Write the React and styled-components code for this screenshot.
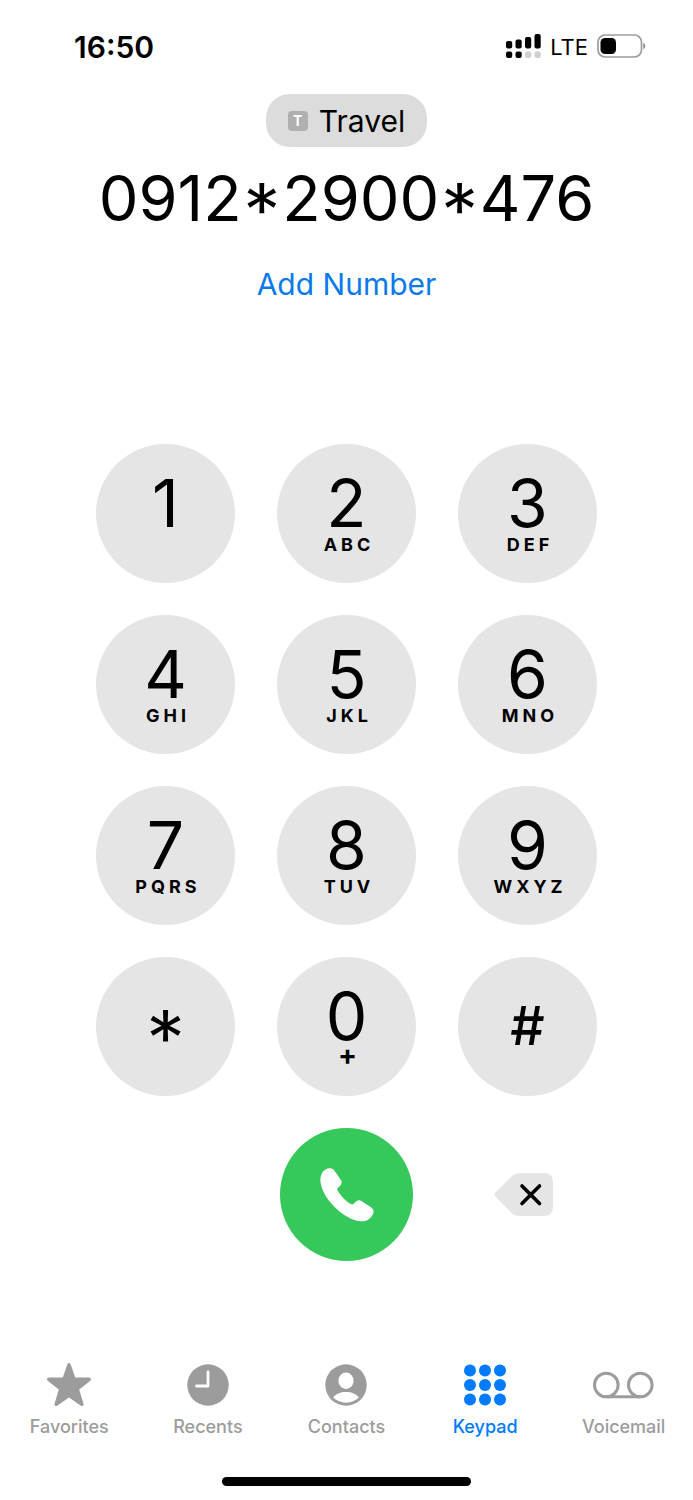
import React, { useState } from 'react'
import styled, { createGlobalStyle } from 'styled-components'

const keys = [
	{ digit: '1', letters: '' },
	{ digit: '2', letters: 'ABC' },
	{ digit: '3', letters: 'DEF' },
	{ digit: '4', letters: 'GHI' },
	{ digit: '5', letters: 'JKL' },
	{ digit: '6', letters: 'MNO' },
	{ digit: '7', letters: 'PQRS' },
	{ digit: '8', letters: 'TUV' },
	{ digit: '9', letters: 'WXYZ' },
	{ digit: '*', isSymbol: true },
	{ digit: '0', letters: '+' },
	{ digit: '#', isSymbol: true },
]

const SignalIcon = () => (
	<svg width="35" height="26" viewBox="0 0 35 26" aria-hidden="true">
		<rect x="0" y="7" width="6.200" height="7.500" rx="2" />
		<rect x="9.500" y="5.500" width="6.200" height="9" rx="2" />
		<rect x="19" y="3" width="6.200" height="11.500" rx="2" />
		<rect x="28.500" y="0" width="6.200" height="14.500" rx="2" />
		<rect x="0" y="17.500" width="6.200" height="6.500" rx="2" />
		<rect x="9.500" y="17.500" width="6.200" height="6.500" rx="2" />
		<rect x="19" y="17.500" width="6.200" height="6.500" rx="2" fill="#d0d0d0" />
		<rect x="28.500" y="17.500" width="6.200" height="6.500" rx="2" fill="#d0d0d0" />
	</svg>
)

const BatteryIcon = () => (
	<svg width="50" height="26" viewBox="0 0 50 26" aria-hidden="true">
		<rect x="1" y="1" width="43.500" height="22" rx="7" fill="none" stroke="#9c9c9c" strokeWidth="1.700" />
		<rect x="3.500" y="4" width="15.500" height="16" rx="4.500" />
		<path d="M46.300 8.700q2 1 2 3.300t-2 3.300z" fill="#8c8c8c" />
	</svg>
)

const PhoneIcon = () => (
	<svg width="54" height="54" viewBox="0 0 54 54" aria-hidden="true">
		<path
			fill="#fff"
			d="M9.5 .3C12 .2 13.500 1.200 14.900 3.200L20.700 11.800C22.200 14 22 15.800 20.300 17.500L18 19.700C17 20.700 17 21.400 17.700 22.700C20.500 27.500 26 33.200 30.900 36.100C32 36.700 32.800 36.600 33.700 35.700L35.700 33.700C37.500 31.900 39.500 31.700 41.800 33.200L50.600 39.100C53.900 41.300 54.300 43.800 52.400 47.200C50.300 51 46 53.500 41.300 53.300C32.500 53 22 46.500 14.300 38.700C6.500 30.900 .7 21 .4 12.600C.2 6.500 3.500 .6 9.500 .3Z"
		/>
	</svg>
)

const DeleteIcon = () => (
	<svg width="59" height="43" viewBox="0 0 59 43" aria-hidden="true">
		<path
			fill="#e5e5e5"
			d="M1.200 19.700L17.500 3.500Q21 0 26 0H50Q59 0 59 9V34Q59 43 50 43H26Q21 43 17.500 39.800L1.200 23.300Q-.6 21.500 1.200 19.700Z"
		/>
		<path d="M28 13L45.500 30.500M45.500 13L28 30.500" stroke="#000" strokeWidth="3.600" strokeLinecap="round" />
	</svg>
)

const StarIcon = () => (
	<svg width="46" height="44" viewBox="0 0 46 44" aria-hidden="true">
		<path
			d="M23 1.800L28 16.300H43.200L31.200 26L35.800 41.200L23 32.200L10.200 41.200L14.800 26L2.800 16.300H18Z"
			fill="currentColor"
			stroke="currentColor"
			strokeWidth="3.500"
			strokeLinejoin="round"
		/>
	</svg>
)

const ClockIcon = () => (
	<svg width="42" height="42" viewBox="0 0 42 42" aria-hidden="true">
		<circle cx="21" cy="21" r="20.700" fill="currentColor" />
		<path d="M21 8V22H9.500" fill="none" stroke="#fff" strokeWidth="2.800" strokeLinecap="round" strokeLinejoin="round" />
	</svg>
)

const PersonIcon = () => (
	<svg width="42" height="42" viewBox="0 0 42 42" aria-hidden="true">
		<circle cx="21" cy="21" r="20.700" fill="currentColor" />
		<ellipse cx="21" cy="16.800" rx="7.600" ry="8.200" fill="#fff" />
		<path d="M8.200 33.600C10.500 29.800 15.300 27.900 21 27.900S31.500 29.800 33.800 33.600C30.500 36.900 26 38.800 21 38.800S11.500 36.900 8.200 33.600Z" fill="#fff" />
	</svg>
)

const KeypadIcon = () => (
	<svg width="42" height="42" viewBox="0 0 42 42" aria-hidden="true" fill="currentColor">
		{[6.5, 21, 35.5].map(y => [6, 21, 36].map(x => <circle key={`${x}-${y}`} cx={x} cy={y} r="6" />))}
	</svg>
)

const VoicemailIcon = () => (
	<svg width="62" height="28" viewBox="0 0 62 28" aria-hidden="true" fill="none" stroke="currentColor" strokeWidth="3">
		<circle cx="13.300" cy="14" r="11.800" />
		<circle cx="47.300" cy="14" r="11.800" />
		<path d="M13.300 25.800H47.300" />
	</svg>
)

const tabs = [
	{ name: 'Favorites', Icon: StarIcon },
	{ name: 'Recents', Icon: ClockIcon },
	{ name: 'Contacts', Icon: PersonIcon },
	{ name: 'Keypad', Icon: KeypadIcon },
	{ name: 'Voicemail', Icon: VoicemailIcon },
]

export default function App() {
	const [number, setNumber] = useState('0912*2900*476')
	const [activeTab, setActiveTab] = useState('Keypad')

	return (
		<Screen>
			<GlobalStyle />
			<StatusBar>
				<Time>16:50</Time>
				<StatusIcons>
					<SignalIcon />
					<Network>LTE</Network>
					<BatteryIcon />
				</StatusIcons>
			</StatusBar>

			<Header>
				<LineButton type="button">
					<LineBadge>T</LineBadge>
					Travel
				</LineButton>
				<DialedNumber>{number}</DialedNumber>
				<AddNumber type="button">Add Number</AddNumber>
			</Header>

			<Keypad>
				{keys.map(key => (
					<Key key={key.digit} type="button" $isSymbol={key.isSymbol} onClick={() => setNumber(number + key.digit)}>
						<Digit $isHash={key.digit === '#'}>{key.digit}</Digit>
						{key.letters && <Letters $isPlus={key.letters === '+'}>{key.letters}</Letters>}
					</Key>
				))}
				<CallButton type="button" aria-label="Call">
					<PhoneIcon />
				</CallButton>
				<DeleteButton type="button" aria-label="Delete" onClick={() => setNumber(number.slice(0, -1))}>
					<DeleteIcon />
				</DeleteButton>
			</Keypad>

			<TabBar>
				{tabs.map(({ name, Icon }) => (
					<Tab key={name} type="button" $isActive={name === activeTab} onClick={() => setActiveTab(name)}>
						<TabIcon>
							<Icon />
						</TabIcon>
						{name}
					</Tab>
				))}
			</TabBar>
			<HomeIndicator />
		</Screen>
	)
}

const GlobalStyle = createGlobalStyle`
	* {
		box-sizing: border-box;
	}

	body {
		margin: 0;
		background: #fff;
		color: #000;
		font-family: Inter, 'Liberation Sans', sans-serif;
	}

	button {
		margin: 0;
		padding: 0;
		border: 0;
		background: none;
		color: inherit;
		font-family: inherit;
		cursor: pointer;
	}

	svg {
		display: block;
	}
`

const Screen = styled.div`
	display: flex;
	flex-direction: column;
	min-height: 100vh;
`

const StatusBar = styled.div`
	display: flex;
	justify-content: space-between;
	align-items: center;
	height: 94px;
	padding: 0 46px 0 74px;
`

const Time = styled.span`
	font-size: 30px;
	font-weight: 600;
	line-height: 32px;
`

const StatusIcons = styled.div`
	display: flex;
	align-items: center;
	gap: 9px;
`

const Network = styled.span`
	font-size: 22px;
	line-height: 32px;
`

const Header = styled.header`
	display: flex;
	flex-direction: column;
	align-items: center;
`

const LineButton = styled.button`
	display: flex;
	align-items: center;
	gap: 11px;
	height: 53px;
	padding: 0 22px;
	border-radius: 24px;
	background: #dcdcdc;
	font-size: 30px;
	line-height: 40px;
`

const LineBadge = styled.span`
	width: 20px;
	border-radius: 4px;
	background: #b0b0b0;
	color: #fff;
	font-size: 14px;
	font-weight: 700;
	line-height: 20px;
	text-align: center;
`

const DialedNumber = styled.div`
	padding-top: 11px;
	font-size: 63px;
	line-height: 80px;
	font-feature-settings: 'case';
`

const AddNumber = styled.button`
	margin-top: 26px;
	color: #0a7aea;
	font-size: 30px;
	line-height: 40px;
`

const Keypad = styled.main`
	display: grid;
	grid-template-columns: repeat(3, 139px);
	gap: 32px 42px;
	justify-content: center;
	padding-top: 140px;
`

const Key = styled.button`
	display: flex;
	flex-direction: column;
	align-items: center;
	height: 139px;
	padding-top: ${props => (props.$isSymbol ? '37px' : '27px')};
	border-radius: 50%;
	background: #e5e5e5;
`

const Digit = styled.span`
	font-size: ${props => (props.$isHash ? '54px' : '66px')};
	font-weight: ${props => (props.$isHash ? 500 : 400)};
	line-height: 64px;
	font-feature-settings: 'case';
`

const Letters = styled.span`
	padding-left: ${props => (props.$isPlus ? '2px' : '5px')};
	font-size: ${props => (props.$isPlus ? '28px' : '18px')};
	font-weight: 700;
	line-height: ${props => (props.$isPlus ? '14px' : '20px')};
	letter-spacing: ${props => (props.$isPlus ? 'normal' : '4px')};
`

const CallButton = styled.button`
	display: flex;
	grid-column: 2;
	justify-self: center;
	align-items: center;
	justify-content: center;
	width: 133px;
	height: 133px;
	border-radius: 50%;
	background: #36c85b;
`

const DeleteButton = styled.button`
	display: flex;
	align-items: center;
	padding-left: 36px;
`

const TabBar = styled.nav`
	display: grid;
	grid-template-columns: repeat(5, 1fr);
	margin-top: auto;
`

const Tab = styled.button`
	display: flex;
	flex-direction: column;
	align-items: center;
	gap: 8px;
	color: ${props => (props.$isActive ? '#007aff' : '#9c9c9c')};
	font-size: 18px;
	font-weight: 500;
	line-height: 24px;
`

const TabIcon = styled.span`
	display: flex;
	align-items: center;
	height: 44px;
`

const HomeIndicator = styled.div`
	width: 36%;
	height: 9px;
	margin: 38px auto 14px;
	border-radius: 5px;
	background: #000;
`
